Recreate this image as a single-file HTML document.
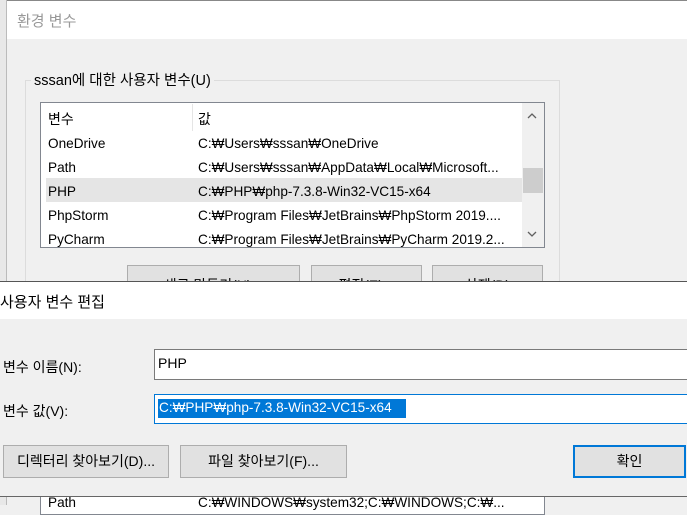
<!DOCTYPE html>
<html><head><meta charset="utf-8"><style>
*{margin:0;padding:0;box-sizing:border-box}
body{width:687px;height:505px;overflow:hidden;background:#f0f0f0;position:relative;font-family:"Liberation Sans","Noto Sans CJK KR",sans-serif;font-size:14px;color:#000}
.a{position:absolute;white-space:nowrap}
.r{font-size:13.6px;line-height:16px}
.btn{position:absolute;background:#e1e1e1;border:1px solid #adadad;text-align:center}
</style></head><body>
<div class="a" style="left:0;top:0;width:7px;height:505px;background:#e8e8e8;border-right:1px solid #bbb"></div>
<div class="a" style="left:7px;top:0;width:680px;height:282px;background:#f0f0f0;border-top:1px solid #888"></div>
<div class="a" style="left:7px;top:1px;width:680px;height:38px;background:#fff"></div>
<div class="a" style="left:17px;top:10px;color:#999;font-size:15px">환경 변수</div>
<div class="a" style="left:25px;top:80px;width:535px;height:210px;border:1px solid #dcdcdc"></div>
<div class="a" style="left:31px;top:69px;background:#f0f0f0;padding:0 3px;font-size:14.5px">sssan에 대한 사용자 변수(U)</div>
<div class="a" style="left:40px;top:102px;width:505px;height:146px;border:1px solid #828790;background:#fff;overflow:hidden">
 <div class="a" style="left:151px;top:1px;width:1px;height:27px;background:#e5e5e5"></div>
 <div class="a" style="left:7px;top:6px">변수</div>
 <div class="a" style="left:157px;top:6px">값</div>
 <div class="a" style="left:5px;top:75px;width:476px;height:24px;background:#e5e5e5"></div>
 <div class="a r" style="left:7px;top:33px">OneDrive</div><div class="a r" style="left:157px;top:33px">C:₩Users₩sssan₩OneDrive</div>
 <div class="a r" style="left:7px;top:57px">Path</div><div class="a r" style="left:157px;top:57px">C:₩Users₩sssan₩AppData₩Local₩Microsoft...</div>
 <div class="a r" style="left:7px;top:81px">PHP</div><div class="a r" style="left:157px;top:81px">C:₩PHP₩php-7.3.8-Win32-VC15-x64</div>
 <div class="a r" style="left:7px;top:105px">PhpStorm</div><div class="a r" style="left:157px;top:105px">C:₩Program Files₩JetBrains₩PhpStorm 2019....</div>
 <div class="a r" style="left:7px;top:129px">PyCharm</div><div class="a r" style="left:157px;top:129px">C:₩Program Files₩JetBrains₩PyCharm 2019.2...</div>
 <div class="a" style="left:481px;top:0;width:22px;height:146px;background:#f0f0f0"></div>
 <svg class="a" style="left:486px;top:9px" width="10" height="8"><path d="M1 6L5 2L9 6" stroke="#606060" stroke-width="1.3" fill="none"/></svg>
 <div class="a" style="left:482px;top:65px;width:20px;height:25px;background:#cdcdcd"></div>
 <svg class="a" style="left:486px;top:127px" width="10" height="8"><path d="M1 2L5 6L9 2" stroke="#606060" stroke-width="1.3" fill="none"/></svg>
</div>
<div class="btn" style="left:127px;top:265px;width:173px;height:30px;padding-top:9px">새로 만들기(N)...</div>
<div class="btn" style="left:311px;top:265px;width:111px;height:30px;padding-top:9px">편집(E)...</div>
<div class="btn" style="left:432px;top:265px;width:111px;height:30px;padding-top:9px">삭제(D)</div>
<div class="a" style="left:40px;top:485px;width:505px;height:30px;border:1px solid #828790;background:#fff"></div>
<div class="a r" style="left:48px;top:495px">Path</div>
<div class="a r" style="left:198px;top:495px">C:₩WINDOWS₩system32;C:₩WINDOWS;C:₩...</div>
<div class="a" style="left:0;top:281px;width:687px;height:216px;background:#f0f0f0;border-top:1px solid #555;border-bottom:1px solid #666"></div>
<div class="a" style="left:0;top:282px;width:687px;height:37px;background:#fff"></div>
<div class="a" style="left:0;top:291px;font-size:15px">사용자 변수 편집</div>
<div class="a" style="left:3px;top:357px;font-size:14px">변수 이름(N):</div>
<div class="a" style="left:154px;top:349px;width:540px;height:31px;border:1px solid #7a7a7a;background:#fff"></div>
<div class="a" style="left:158px;top:355px;font-size:14px">PHP</div>
<div class="a" style="left:3px;top:401px;font-size:14px">변수 값(V):</div>
<div class="a" style="left:154px;top:394px;width:540px;height:30px;border:1px solid #0078d7;background:#fff"></div>
<div class="a" style="left:158px;top:399px;width:248px;height:19px;background:#0078d7"></div>
<div class="a r" style="left:159px;top:400px;color:#fff">C:₩PHP₩php-7.3.8-Win32-VC15-x64</div>
<div class="btn" style="left:3px;top:445px;width:166px;height:33px;line-height:31px;font-size:14px">디렉터리 찾아보기(D)...</div>
<div class="btn" style="left:180px;top:445px;width:167px;height:33px;line-height:31px;font-size:14px">파일 찾아보기(F)...</div>
<div class="btn" style="left:573px;top:445px;width:113px;height:33px;line-height:29px;font-size:14px;border:2px solid #0078d7">확인</div>
</body></html>
